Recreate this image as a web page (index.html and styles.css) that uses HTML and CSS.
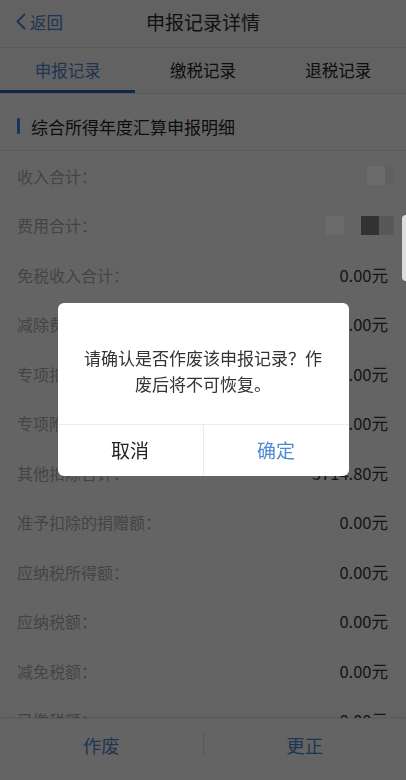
FILE: index.html
```html
<!DOCTYPE html>
<html lang="zh-CN">
<head>
    <meta charset="UTF-8">
    <meta name="viewport" content="width=device-width, initial-scale=1.0">
    <title>申报记录详情</title>
    <link rel="stylesheet" href="styles.css">
</head>
<body>
    <div class="page">
        <header class="nav">
            <a class="back" href="#">
                <svg class="back-icon" width="11" height="17" viewBox="0 0 11 17">
                    <polyline points="9.5,1.5 2.5,8.5 9.5,15.5" fill="none" stroke="currentColor" stroke-width="2" stroke-linecap="round" stroke-linejoin="round"/>
                </svg>
                <span>返回</span>
            </a>
            <h1 class="nav-title">申报记录详情</h1>
        </header>

        <nav class="tabs">
            <div class="tab active">申报记录</div>
            <div class="tab">缴税记录</div>
            <div class="tab">退税记录</div>
        </nav>

        <div class="section-head">
            <span class="section-bar"></span>
            <span class="section-title">综合所得年度汇算申报明细</span>
        </div>

        <div class="list">
            <div class="row">
                <span class="label">收入合计：</span>
                <span class="value masked">
                    <i class="px light"></i><i class="px fade"></i>
                </span>
            </div>
            <div class="row">
                <span class="label">费用合计：</span>
                <span class="value masked">
                    <i class="px light"></i><i class="px gap"></i><i class="px dark"></i><i class="px fade wide"></i>
                </span>
            </div>
            <div class="row"><span class="label">免税收入合计：</span><span class="value">0.00元</span></div>
            <div class="row"><span class="label">减除费用：</span><span class="value">0.00元</span></div>
            <div class="row"><span class="label">专项扣除：</span><span class="value">0.00元</span></div>
            <div class="row"><span class="label">专项附加扣除：</span><span class="value">0.00元</span></div>
            <div class="row"><span class="label">其他扣除合计：</span><span class="value">3714.80元</span></div>
            <div class="row"><span class="label">准予扣除的捐赠额：</span><span class="value">0.00元</span></div>
            <div class="row"><span class="label">应纳税所得额：</span><span class="value">0.00元</span></div>
            <div class="row"><span class="label">应纳税额：</span><span class="value">0.00元</span></div>
            <div class="row"><span class="label">减免税额：</span><span class="value">0.00元</span></div>
            <div class="row"><span class="label">已缴税额：</span><span class="value">0.00元</span></div>
        </div>

        <footer class="actions">
            <button class="action">作废</button>
            <span class="action-sep"></span>
            <button class="action">更正</button>
        </footer>
    </div>

    <!-- 作废确认弹窗 -->
    <div class="mask">
        <div class="dialog">
            <p class="dialog-msg">请确认是否作废该申报记录？作废后将不可恢复。</p>
            <div class="dialog-btns">
                <button class="dialog-btn cancel">取消</button>
                <button class="dialog-btn ok">确定</button>
            </div>
        </div>
    </div>

    <div class="side-handle"></div>
</body>
</html>
```

FILE: styles.css
```css
* {
    margin: 0;
    padding: 0;
    box-sizing: border-box;
}

body {
    font-family: "Noto Sans CJK SC", "Noto Sans", sans-serif;
    background: #eee;
    color: #333;
    width: 406px;
    height: 780px;
    overflow: hidden;
}

.page {
    height: 780px;
    display: flex;
    flex-direction: column;
    background: #eee;
}

/* 顶部导航 */
.nav {
    height: 48px;
    padding-bottom: 4px;
    display: flex;
    align-items: center;
    justify-content: center;
    border-bottom: 1px solid #d6d6d6;
    background: #e9e9e9;
    position: relative;
}

.back {
    position: absolute;
    left: 15px;
    top: 0;
    height: 43px;
    display: flex;
    align-items: center;
    gap: 4px;
    color: #4a7fc4;
    text-decoration: none;
    font-size: 16.5px;
}

.back-icon {
    display: block;
}

.nav-title {
    font-size: 19px;
    font-weight: normal;
    color: #2a2a2a;
}

/* 标签栏 */
.tabs {
    height: 46px;
    padding-bottom: 2px;
    display: grid;
    grid-template-columns: repeat(3, 1fr);
    border-bottom: 1px solid #d6d6d6;
    background: #e9e9e9;
}

.tab {
    display: flex;
    align-items: center;
    justify-content: center;
    font-size: 16.5px;
    color: #222;
}

.tab.active {
    color: #4a7fc4;
    box-shadow: 0 2px 0 #2f5fa0, inset 0 -1px 0 #2f5fa0;
}

/* 区块标题 */
.section-head {
    height: 57px;
    padding-top: 8px;
    padding-left: 17px;
    display: flex;
    align-items: center;
    gap: 11px;
    border-bottom: 1px solid #d8d8d8;
}

.section-bar {
    width: 3px;
    height: 16px;
    border-radius: 1px;
    background: #3c7fda;
}

.section-title {
    font-size: 17px;
    color: #1e1e1e;
}

/* 明细列表 */
.list {
    flex: 1;
    overflow: hidden;
}

.row {
    height: 49.5px;
    display: flex;
    align-items: center;
    justify-content: space-between;
    padding: 0 18px 0 17px;
}

.label {
    font-size: 16px;
    color: #a2a2a2;
}

.value {
    font-size: 16.5px;
    color: #333;
}

.masked {
    display: flex;
    align-items: center;
    margin-right: -6px;
}

.px {
    display: block;
    width: 18px;
    height: 19px;
}

.px.light { background: #fff; }
.px.dark { background: #777; }
.px.gap { background: transparent; width: 17px; }
.px.fade { background: #e2e2e2; width: 9px; opacity: 0.8; }
.px.fade.wide { width: 15px; background: #c9c9c9; }

/* 底部操作 */
.actions {
    height: 62px;
    padding-bottom: 10px;
    display: flex;
    align-items: center;
    background: #efefef;
    border-top: 1px solid #dcdcdc;
    box-shadow: 0 -2px 4px rgba(0,0,0,0.06);
}

.action {
    flex: 1;
    height: 100%;
    border: none;
    background: none;
    font-family: inherit;
    font-size: 18.5px;
    color: #4a7fc4;
}

.action-sep {
    width: 1px;
    height: 25px;
    background: #d0d0d0;
}

/* 遮罩与弹窗 */
.mask {
    position: fixed;
    inset: 0;
    background: rgba(0,0,0,0.58);
    display: flex;
    align-items: center;
    justify-content: center;
}

.dialog {
    width: 291px;
    margin-top: -1px;
    background: #fff;
    border-radius: 6px;
    overflow: hidden;
}

.dialog-msg {
    padding: 42px 25px 27px;
    font-size: 17px;
    line-height: 26px;
    text-align: center;
    color: #333;
}

.dialog-btns {
    display: flex;
    height: 52px;
    border-top: 1px solid #ececec;
}

.dialog-btn {
    flex: 1;
    border: none;
    background: none;
    font-family: inherit;
    font-size: 19px;
    padding-bottom: 3px;
}

.dialog-btn.cancel {
    color: #222;
    border-right: 1px solid #ececec;
}

.dialog-btn.ok {
    color: #4b8bd3;
}

.side-handle {
    position: fixed;
    right: 0;
    top: 215px;
    width: 4px;
    height: 66px;
    background: #dcdcdc;
    border-radius: 4px 0 0 4px;
}
```
